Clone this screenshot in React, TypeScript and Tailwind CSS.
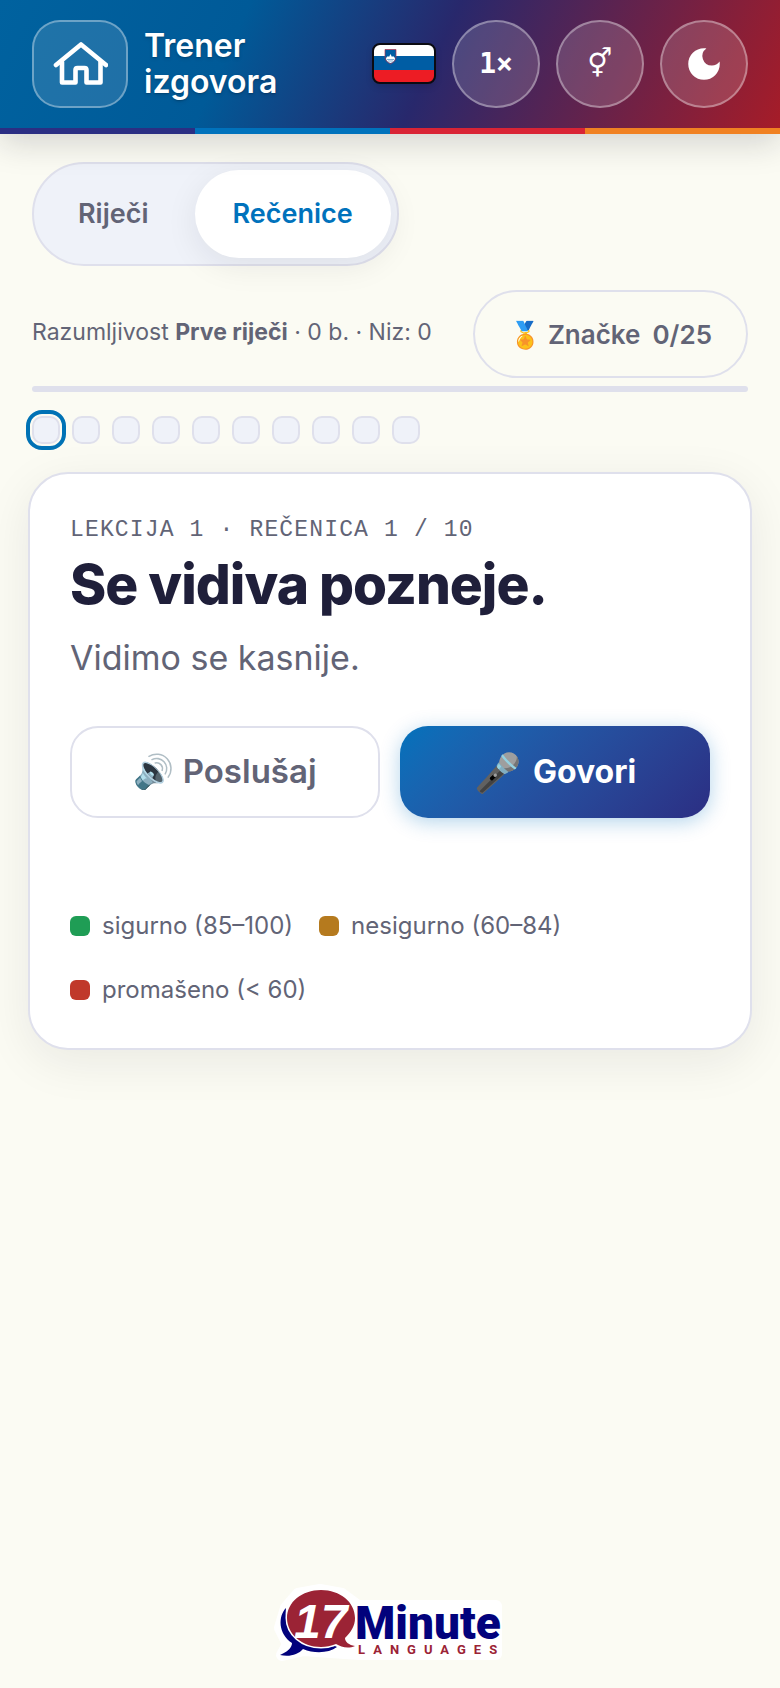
import React, { useState } from "react";
import clsx from "clsx";

const TABS = ["Riječi", "Rečenice"];

const LEGEND = [
  { label: "sigurno (85–100)", color: "bg-[#1f9d55]" },
  { label: "nesigurno (60–84)", color: "bg-[#b57a1e]" },
  { label: "promašeno (< 60)", color: "bg-[#c0392b]" },
];

const HomeIcon = () => (
  <svg
    viewBox="0 0 56 46"
    className="w-14 h-[46px]"
    fill="none"
    stroke="currentColor"
    strokeWidth="4.6"
    strokeLinecap="round"
    strokeLinejoin="round"
    aria-hidden="true"
  >
    <path d="M4 24 29 3.500 54 24" />
    <path d="M10 21v20.500h13.500V29q0-2 2-2h7q2 0 2 2v12.500H48.500V21" />
  </svg>
);

const MoonIcon = () => (
  <svg viewBox="0 0 24 24" className="w-[42px] h-[42px]" fill="currentColor" aria-hidden="true">
    <path d="M12 3a9 9 0 1 0 9 9c0-.46-.04-.92-.1-1.36a5.389 5.389 0 0 1-4.4 2.26 5.403 5.403 0 0 1-3.14-9.8c-.44-.06-.9-.1-1.36-.1z" />
  </svg>
);

const Flag = () => (
  <svg viewBox="0 0 64 42" className="w-16 h-[42px] shrink-0 drop-shadow-md" role="img" aria-label="Slovenščina">
    <clipPath id="flag">
      <rect x="1" y="1" width="62" height="39" rx="7" />
    </clipPath>
    <g clipPath="url(#flag)">
      <rect width="64" height="14" fill="#fff" />
      <rect y="13" width="64" height="15" fill="#005da4" />
      <rect y="27" width="64" height="15" fill="#ed1c24" />
    </g>
    <path d="M13 6.5h11v8q0 4-5.5 6.5Q13 18.500 13 14.500z" fill="#005da4" stroke="#b8324a" strokeWidth=".7" />
    <path d="m14 15 2-2 1 1 1.500-3 1.500 3 1-1 2 2q0 3.500-4.500 5-4.500-1.500-4.500-5z" fill="#fff" />
    <path d="M15 16.500h7M16 18h5" stroke="#005da4" strokeWidth=".5" />
    <rect x="1" y="1" width="62" height="39" rx="7" fill="none" stroke="#0b0b12" strokeWidth="2" />
  </svg>
);

const Logo = () => (
  <svg viewBox="0 0 240 96" className="w-60 h-24" role="img" aria-label="17 Minute Languages">
    <path
      d="M16 24 28 10 50 6 72 10 88 22H226V70H90L60 68 34 66 12 71 18 60 10 44z"
      stroke="#fff"
      strokeWidth="12"
      strokeLinejoin="round"
      fill="#fff"
    />
    <path
      d="M16 24C8 32 8 50 22 59c0 5-5 9-12 12 9 2 18 0 23-6 12 5 26 4 34-2l-2-1C46 66 26 58 19 45c-3-7-4-14-3-21z"
      fill="#02027c"
    />
    <path
      d="M51 6c19 0 34 12 34 28 0 8-4 14-10 20 0 4 4 7 10 8-7 3-14 1-19-2-5 2-10 3-15 3-19 0-34-13-34-29S32 6 51 6z"
      fill="#9b2335"
      stroke="#fff"
      strokeWidth="3"
      paintOrder="stroke"
    />
    <text x="24" y="54" fill="#fff" className="font-['Liberation_Sans',sans-serif] text-[48px] font-bold italic">
      17
    </text>
    <text x="85" y="55" fill="#02027c" className="font-['Roboto',sans-serif] text-[46px] font-black">
      Minute
    </text>
    <text
      x="88"
      y="70"
      fill="#9b2335"
      className="font-['Roboto',sans-serif] text-[13px] font-bold tracking-[8px]"
    >
      LANGUAGES
    </text>
  </svg>
);

const roundButton =
  "size-22 shrink-0 rounded-full border-2 border-white/35 bg-white/15 text-white flex items-center justify-center";

const Header = () => (
  <header className="relative shadow-[0_8px_32px_rgba(20,20,40,0.18)]">
    <div className="flex items-center gap-4 px-8 py-5 bg-[linear-gradient(115deg,#00629f_0%,#005a98_30%,#28286c_55%,#a61c28_100%)]">
      <button
        aria-label="Početna"
        className="w-24 h-22 shrink-0 rounded-[28px] border-2 border-white/35 bg-white/12 text-white flex items-center justify-center"
      >
        <HomeIcon />
      </button>
      <h1 className="grow text-[32px] leading-9 font-semibold text-white text-shadow-md">Trener izgovora</h1>
      <Flag />
      <button
        aria-label="Brzina"
        className={clsx(roundButton, "text-[28px] font-bold font-['DejaVu_Sans_Mono',monospace]")}
      >
        1×
      </button>
      <button aria-label="Glas" className={clsx(roundButton, "text-[28px] font-['DejaVu_Sans',sans-serif]")}>
        ⚥
      </button>
      <button aria-label="Tamni način" className={roundButton}>
        <MoonIcon />
      </button>
    </div>
    <div className="grid grid-cols-4 h-[6px]">
      <span className="bg-[#2b2e83]" />
      <span className="bg-[#0072bc]" />
      <span className="bg-[#d92435]" />
      <span className="bg-[#f08122]" />
    </div>
  </header>
);

const App: React.FC = () => {
  const [tab, setTab] = useState("Rečenice");
  const [current, setCurrent] = useState(0);

  return (
    <div className="min-h-screen flex flex-col bg-[#fbfbf3] font-['Inter',sans-serif] text-[#626476]">
      <Header />
      <main className="flex flex-col px-7 pt-7">
        <div className="mx-1 self-start flex gap-2 p-[6px] rounded-full border-2 border-[#dfe0ec] bg-[#eff2f9]">
          {TABS.map((name) => (
            <button
              key={name}
              onClick={() => setTab(name)}
              className={clsx(
                "h-22 px-[38px] rounded-full text-[27px] font-semibold",
                tab === name && "bg-white text-[#0072bc] shadow-[0_8px_32px_rgba(20,20,40,0.08)]"
              )}
            >
              {name}
            </button>
          ))}
        </div>

        <div className="mx-1 mt-6 flex items-center justify-between">
          <p className="pb-1 text-[23px] leading-8">
            Razumljivost <strong>Prve riječi</strong> · 0 b. · Niz: 0
          </p>
          <button className="h-22 px-[34px] flex items-center gap-3 rounded-full border-2 border-[#dfe0ec] text-[26px] font-semibold">
            <span>🏅 Značke</span>
            <span>0/25</span>
          </button>
        </div>
        <div className="mx-1 mt-2 h-[6px] rounded-full bg-[#dfe0ec]" />

        <div className="mx-1 mt-6 flex gap-3">
          {Array.from({ length: 10 }, (_, i) => (
            <button
              key={i}
              aria-label={`Rečenica ${i + 1}`}
              onClick={() => setCurrent(i)}
              className={clsx(
                "size-7 rounded-[10px] border-2 border-[#dfe0ec] bg-[#eff2f9]",
                current === i && "outline-4 outline-offset-2 outline-[#0072b5]"
              )}
            />
          ))}
        </div>

        <section className="mt-7 px-10 pt-10 pb-[26px] rounded-[40px] border-2 border-[#dfe0ec] bg-white shadow-[0_12px_48px_rgba(20,20,40,0.08)]">
          <p className="font-['Liberation_Mono',monospace] text-[23px] leading-8 tracking-wider uppercase">
            Lekcija 1 · Rečenica 1 / 10
          </p>
          <h2 className="mt-[6px] text-[55px] leading-16 font-extrabold tracking-[-1px] text-[#1f1f3a]">
            Se vidiva pozneje.
          </h2>
          <p className="mt-[18px] text-[34px] leading-12">Vidimo se kasnije.</p>

          <div className="mt-11 grid grid-cols-2 gap-5">
            <button className="h-23 rounded-[28px] border-2 border-[#dfe0ec] text-[33px] font-semibold">
              🔊 Poslušaj
            </button>
            <button className="h-23 rounded-[28px] flex items-center justify-center gap-3 bg-linear-135 from-[#0072bc] to-[#2b2e83] text-white font-bold shadow-[0_4px_20px_rgba(0,114,188,0.3)]">
              <span className="text-[38px]">🎤</span>
              <span className="text-[32px]">Govori</span>
            </button>
          </div>

          <ul className="mt-19 flex flex-wrap gap-x-[26px] text-[24px] leading-16">
            {LEGEND.map((item) => (
              <li key={item.label} className="flex items-center gap-3">
                <span className={clsx("size-5 rounded-md", item.color)} />
                {item.label}
              </li>
            ))}
          </ul>
        </section>
      </main>
      <footer className="mt-auto flex justify-center pb-2">
        <Logo />
      </footer>
    </div>
  );
};

export default App;
